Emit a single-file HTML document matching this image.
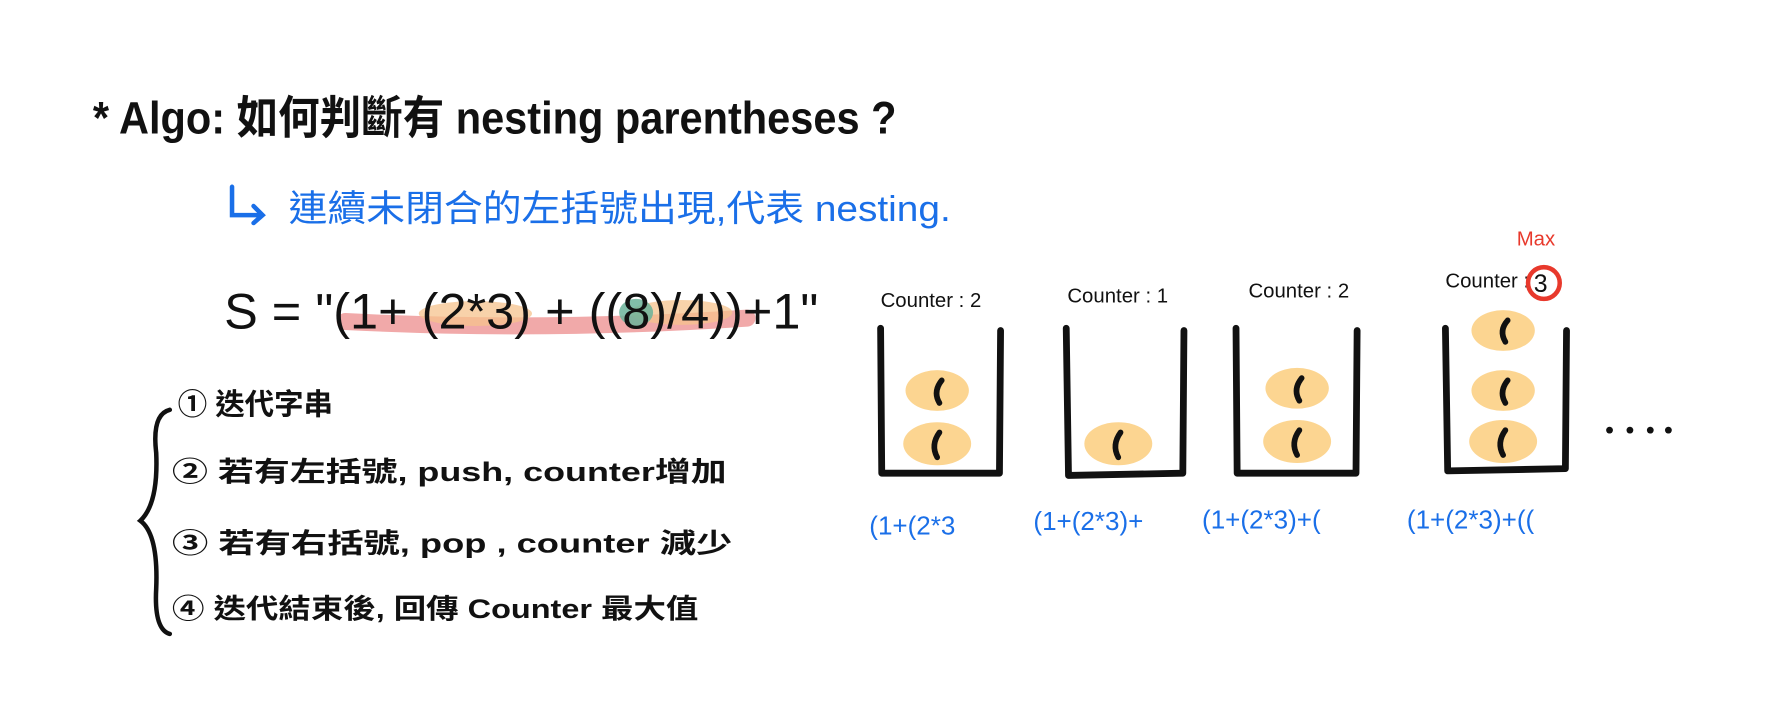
<!DOCTYPE html>
<html><head><meta charset="utf-8"><style>
html,body{margin:0;padding:0;background:#fff;}
svg{display:block;}
text{font-family:"Liberation Sans","Noto Sans CJK TC",sans-serif;}
</style></head><body>
<svg width="1768" height="703" viewBox="0 0 1562 621" xmlns="http://www.w3.org/2000/svg">
<rect width="1562" height="621" fill="#fff"/>
<text x="82" y="118" font-size="40" fill="#111" font-weight="bold" textLength="710" lengthAdjust="spacingAndGlyphs">* Algo: 如何判斷有 nesting parentheses ?</text>
<path d="M205 165 L205 190 L232 190 M224 182 L232 190 L224 197" stroke="#1a6fe8" stroke-width="4" fill="none" stroke-linecap="round"/>
<text x="255" y="195" font-size="32" fill="#1a6fe8" textLength="585" lengthAdjust="spacingAndGlyphs">連續未閉合的左括號出現,代表 nesting.</text>
<path d="M305 284 Q480 293 660 281" stroke="#ee9a9a" stroke-width="15" fill="none" stroke-linecap="round" opacity="0.85"/>
<ellipse cx="420" cy="277" rx="50" ry="11" fill="#f5c38e" opacity="0.75"/>
<ellipse cx="602" cy="276" rx="45" ry="11" fill="#f5c38e" opacity="0.75"/>
<ellipse cx="562" cy="276" rx="15" ry="12" fill="#6bb39a" opacity="0.85"/>
<text x="198" y="290" font-size="44" fill="#111" textLength="525" lengthAdjust="spacingAndGlyphs">S = "(1+ (2*3) + ((8)/4))+1"</text>
<path d="M150 362 Q134 366 138 400 Q140 445 124 460 Q140 472 138 520 Q136 556 150 560" stroke="#111" stroke-width="4" fill="none" stroke-linecap="round"/>
<text x="157" y="366" font-size="26" fill="#111" font-weight="bold">① 迭代字串</text>
<text x="152" y="425" font-size="24" fill="#111" font-weight="bold" textLength="490" lengthAdjust="spacingAndGlyphs">② 若有左括號, push, counter增加</text>
<text x="152" y="488" font-size="24" fill="#111" font-weight="bold" textLength="495" lengthAdjust="spacingAndGlyphs">③ 若有右括號, pop , counter 減少</text>
<text x="152" y="546" font-size="24" fill="#111" font-weight="bold" textLength="465" lengthAdjust="spacingAndGlyphs">④ 迭代結束後, 回傳 Counter 最大值</text>
<g font-size="18" fill="#111">
<text x="778" y="271">Counter : 2</text>
<text x="943" y="267">Counter : 1</text>
<text x="1103" y="263">Counter : 2</text>
<text x="1277" y="254">Counter :</text>
<text x="1355" y="258" font-size="22">3</text>
</g>
<circle cx="1364" cy="250" r="14" fill="none" stroke="#e8392c" stroke-width="4"/>
<text x="1340" y="217" font-size="18" fill="#e8392c">Max</text>
<g stroke="#111" stroke-width="6" fill="none" stroke-linecap="round" stroke-linejoin="round">
<path d="M778 290 L779 418 L883 418 L884 292"/>
<path d="M942 290 L944 420 L1045 418 L1046 292"/>
<path d="M1092 290 L1093 418 L1198 418 L1199 292"/>
<path d="M1277 290 L1279 416 L1383 414 L1384 292"/>
</g>
<g fill="#fcd591">
<ellipse cx="828" cy="345" rx="28" ry="18"/><ellipse cx="828" cy="392" rx="30" ry="19"/>
<ellipse cx="988" cy="392" rx="30" ry="19"/>
<ellipse cx="1146" cy="343" rx="28" ry="18"/><ellipse cx="1146" cy="390" rx="30" ry="19"/>
<ellipse cx="1328" cy="292" rx="28" ry="18"/><ellipse cx="1328" cy="345" rx="28" ry="18"/><ellipse cx="1328" cy="390" rx="30" ry="19"/>
</g>
<g stroke="#111" stroke-width="5" fill="none" stroke-linecap="round">
<path d="M832 336 Q824 346 830 356"/><path d="M830 382 Q822 393 828 404"/>
<path d="M990 382 Q982 393 988 404"/>
<path d="M1150 334 Q1142 344 1148 354"/><path d="M1148 380 Q1140 391 1146 402"/>
<path d="M1332 283 Q1324 292 1330 302"/><path d="M1332 336 Q1324 346 1330 356"/><path d="M1330 380 Q1322 391 1328 402"/>
</g>
<g fill="#111"><circle cx="1422" cy="380" r="3"/><circle cx="1440" cy="380" r="3"/><circle cx="1458" cy="380" r="3"/><circle cx="1474" cy="380" r="3"/></g>
<g font-size="23" fill="#1a6fe8">
<text x="768" y="472">(1+(2*3</text>
<text x="913" y="468">(1+(2*3)+</text>
<text x="1062" y="467">(1+(2*3)+(</text>
<text x="1243" y="467">(1+(2*3)+((</text>
</g>
</svg>
</body></html>
